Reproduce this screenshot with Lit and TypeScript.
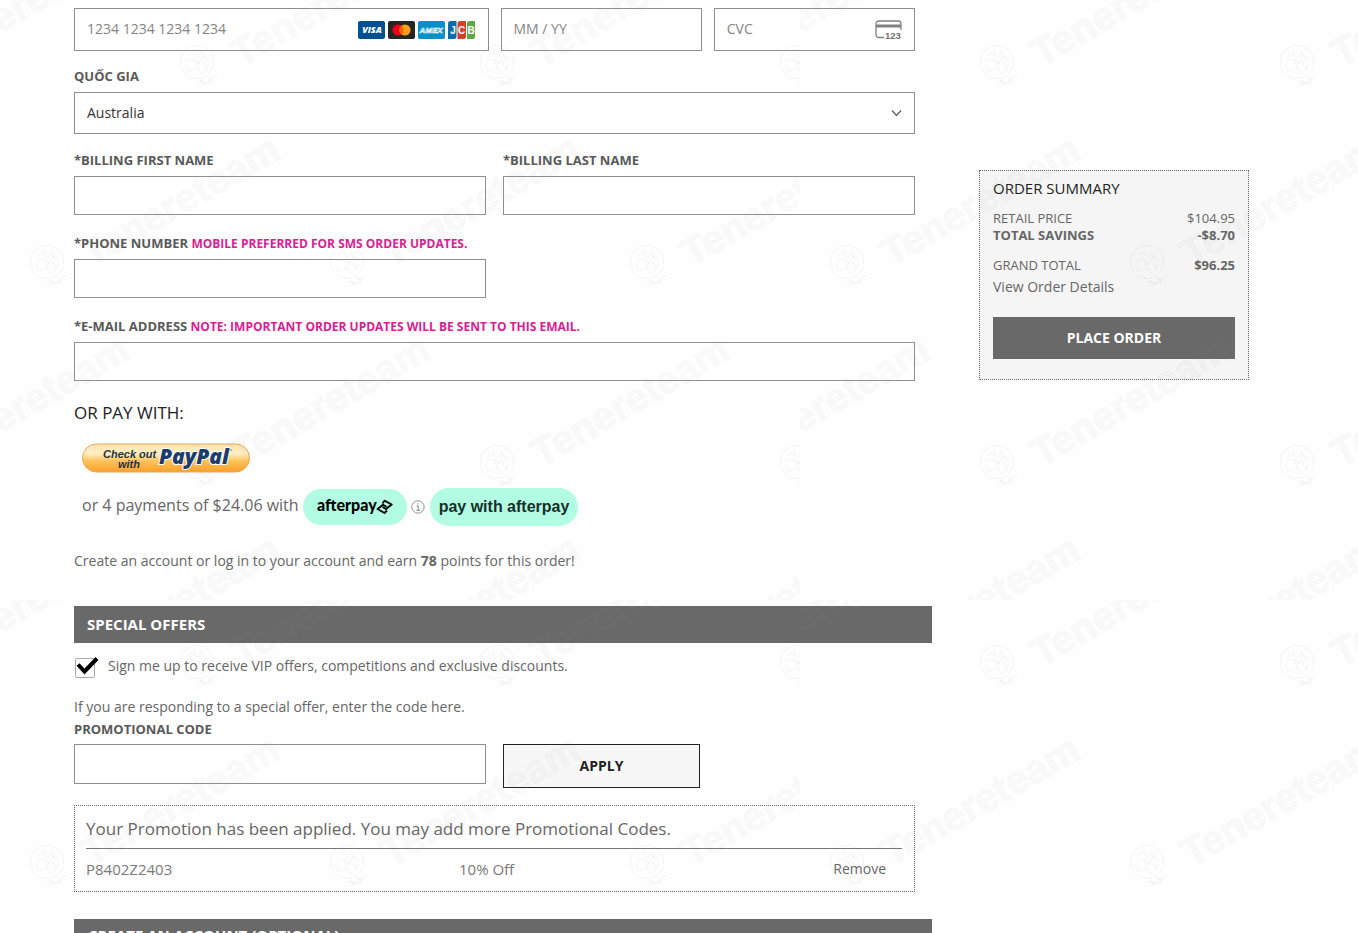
import { LitElement, html, svg, css } from "lit";
import { customElement, state } from "lit/decorators.js";

/* Origins of the watermark stamps inside one 800x600 tile. */
const stamps: Array<[number, number]> = [];
for (let row = 0; row < 4; row++) {
  for (let col = -1; col < 4; col++) {
    stamps.push([(row % 2 ? 50 : -100) + col * 300, 65 + row * 200]);
  }
}

@customElement("water-mark")
export class WaterMark extends LitElement {
  static styles = css`
    :host {
      position: absolute;
      inset: 0;
      overflow: hidden;
      pointer-events: none;
    }
    .sheet {
      display: block;
      width: 100%;
      height: 100%;
    }
    .word {
      font: 700 40px "Liberation Sans", sans-serif;
      fill: #808080;
      fill-opacity: 0.045;
      stroke: #808080;
      stroke-opacity: 0.03;
      stroke-width: 1;
    }
    .seal {
      fill: none;
      stroke: #808080;
      stroke-opacity: 0.12;
      stroke-width: 1;
      stroke-dasharray: 2 1;
    }
  `;

  render() {
    return html`<svg class="sheet" aria-hidden="true">
      <defs>
        <pattern id="tile" width="800" height="600" patternUnits="userSpaceOnUse">
          ${stamps.map(
            ([x, y]) => svg`<g transform="translate(${x} ${y})">
              <g class="seal" transform="translate(-3 -3)">
                <circle r="16.5"></circle>
                <path d="M-9 -7q4 -4 7 0t7 -2M-10 0q5 -5 8 0t3 7M3 -11q6 4 4 10t4 7M-6 9q6 -6 11 3M-3 -3l6 5M9 -5l3 4M-12 3q4 2 3 7M-4 -12l5 4M6 -6l-5 8M12 2q-4 3 -3 8"></path>
                <path d="M0 21l6 -2 3 3 5 -6 6 -3M2 24l6 -3 5 0 3 -5M4 18l3 6M11 15l3 5"></path>
              </g>
              <text class="word" transform="translate(41 3) rotate(-30)">Tenereteam</text>
            </g>`
          )}
        </pattern>
      </defs>
      <rect width="100%" height="100%" fill="url(#tile)"></rect>
    </svg>`;
  }
}

@customElement("card-brands")
export class CardBrands extends LitElement {
  static styles = css`
    :host {
      display: flex;
      gap: 3px;
    }
    svg {
      display: block;
    }
    .mark {
      font: italic 800 9px "Open Sans", sans-serif;
      fill: #fff;
      text-anchor: middle;
    }
    .amex {
      font: italic 700 8px "Liberation Sans", sans-serif;
      fill: #0690c8;
      stroke: #fff;
      stroke-width: 0.6;
      text-anchor: middle;
    }
    .jcb {
      font: 700 10px "Liberation Sans", sans-serif;
      fill: #fff;
      text-anchor: middle;
    }
  `;

  render() {
    return html`
      <svg width="27" height="18" viewBox="0 0 27 18" role="img" aria-label="Visa">
        <rect width="27" height="18" rx="2" fill="#00508f"></rect>
        <text class="mark" x="14" y="12">VISA</text>
      </svg>
      <svg width="27" height="18" viewBox="0 0 27 18" role="img" aria-label="Mastercard">
        <rect width="27" height="18" rx="2" fill="#252525"></rect>
        <circle cx="10" cy="9" r="5.6" fill="#eb001b"></circle>
        <circle cx="17" cy="9" r="5.6" fill="#f79e1b"></circle>
        <path d="M13.5 4.6a5.6 5.6 0 0 1 0 8.8a5.6 5.6 0 0 1 0 -8.8z" fill="#ff5f00"></path>
      </svg>
      <svg width="27" height="18" viewBox="0 0 27 18" role="img" aria-label="American Express">
        <rect width="27" height="18" rx="2" fill="#0690c8"></rect>
        <text class="amex" x="13" y="12">AMEX</text>
      </svg>
      <svg width="28" height="18" viewBox="0 0 28 18" role="img" aria-label="JCB">
        <path d="M2.5 0H8.500V15.500Q8.500 18 6 18H0V2.500Q0 0 2.500 0z" fill="#0f6cab"></path>
        <path d="M12 0H18V15.500Q18 18 15.500 18H9.500V2.500Q9.500 0 12 0z" fill="#d0402b"></path>
        <path d="M21.500 0H27V15.500Q27 18 24.500 18H19V2.500Q19 0 21.500 0z" fill="#5aa943"></path>
        <text class="jcb" x="5" y="12.500">J</text>
        <text class="jcb" x="13.700" y="12.500">C</text>
        <text class="jcb" x="23" y="12.500">B</text>
      </svg>
    `;
  }
}

@customElement("app-root")
export class AppRoot extends LitElement {
  @state() private vip = true;

  static styles = css`
    :host {
      display: block;
      height: 100vh;
      overflow-x: hidden;
      overflow-y: auto;
      scrollbar-width: none;
      background: #fefefe;
      color: #666;
      font: 14px/20px "Open Sans", "Noto Sans", sans-serif;
    }
    * {
      box-sizing: border-box;
    }
    .page {
      position: relative;
      display: grid;
      grid-template-columns: minmax(0, 1fr) 270px;
      gap: 47px;
      padding: 8px 109px 0 74px;
    }
    .fields {
      margin-right: 17px;
    }
    input,
    select,
    button {
      font: inherit;
      border-radius: 0;
      margin: 0;
    }
    .box {
      display: block;
      width: 100%;
      height: 39px;
      padding: 0 12px;
      border: 1px solid #8f8f8f;
      background: #fff;
      color: #333;
      outline: none;
    }
    .box::placeholder {
      color: #858585;
      opacity: 1;
    }
    .card-row {
      display: grid;
      grid-template-columns: repeat(4, 1fr);
      gap: 12px;
    }
    .cell {
      display: grid;
      align-items: center;
    }
    .cell > * {
      grid-area: 1 / 1;
    }
    .cell > .adorn {
      justify-self: end;
      margin-right: 13px;
      pointer-events: none;
    }
    .wide {
      grid-column: span 2;
    }
    .tall {
      height: 43px;
      padding-bottom: 2px;
    }
    .pick {
      height: 42px;
      appearance: none;
    }
    .label {
      display: block;
      margin-bottom: 6px;
      font-size: 13px;
      font-weight: 700;
      line-height: 20px;
      color: #595959;
    }
    .hint {
      color: #d91c93;
      font-size: 12px;
      line-height: 12px;
    }
    .country {
      margin-top: 15px;
    }
    .halves {
      display: grid;
      grid-template-columns: 1fr 1fr;
      column-gap: 17px;
      row-gap: 18px;
      margin-top: 16px;
    }
    .full {
      grid-column: 1 / -1;
    }
    .pay-title {
      margin: 20px 0 18px;
      font-size: 17px;
      font-weight: 400;
      line-height: 24px;
      color: #222;
    }
    .paypal {
      display: block;
      margin-left: 8px;
      padding: 0;
      border: 0;
      background: none;
    }
    .paypal svg {
      display: block;
    }
    .pp-small {
      font: italic 700 11px "Liberation Sans", sans-serif;
      fill: #27323f;
    }
    .pp-big {
      font: italic 800 21px "Open Sans", sans-serif;
      fill: #1a3b6c;
      stroke: #fff;
      stroke-width: 2;
      paint-order: stroke;
    }
    .later {
      display: flex;
      align-items: center;
      gap: 4px;
      margin: 15px 0 0 8px;
      font-size: 16px;
    }
    .later-text {
      padding-bottom: 4px;
    }
    .afterpay {
      display: block;
      font: 900 16px "Lato", sans-serif;
    }
    .info {
      display: block;
      margin-right: 1px;
    }
    .pay-after {
      height: 38px;
      padding: 0 9px;
      border: 0;
      border-radius: 19px;
      background: #b2fce4;
      color: #163029;
      font: 700 16px/20px "Liberation Sans", sans-serif;
    }
    .points {
      margin: 25px 0 35px;
    }
    .bar {
      margin: 0;
      padding: 0 13px;
      height: 37px;
      background: #696969;
      color: #fff;
      font-size: 15px;
      font-weight: 700;
      line-height: 36px;
    }
    .vip {
      display: flex;
      gap: 9px;
      margin-top: 13px;
    }
    .tick {
      display: grid;
      width: 25px;
      height: 24px;
    }
    .tick > * {
      grid-area: 1 / 1;
    }
    .tick input {
      appearance: none;
      align-self: start;
      width: 20px;
      height: 20px;
      margin: 2px 0 0 1px;
      border: 1px solid #aaa;
      border-radius: 2px;
      background: #fff;
    }
    .tick svg {
      pointer-events: none;
    }
    .special {
      margin: 17px 0 0;
    }
    .special + .label {
      margin: 2px 0 5px;
    }
    .promo-row {
      display: grid;
      grid-template-columns: 1fr 1fr;
      column-gap: 17px;
      align-items: start;
    }
    .promo-row .box {
      height: 40px;
    }
    .apply {
      width: 197px;
      height: 44px;
      border: 1px solid #222;
      background: #f7f7f7;
      color: #222;
      font-weight: 700;
    }
    .applied {
      margin-top: 17px;
      padding: 10px 12px 11px 11px;
      border: 1px dotted #666;
    }
    .applied-note {
      margin: 0;
      padding-bottom: 7px;
      border-bottom: 1px solid #777;
      font-size: 17px;
      line-height: 25px;
    }
    .applied-line {
      display: grid;
      grid-template-columns: 373fr 427fr;
      padding: 10px 16px 0 0;
      font-size: 15px;
      line-height: 21px;
      color: #7a7a7a;
    }
    .applied-end {
      display: flex;
      justify-content: space-between;
    }
    .link {
      color: #666;
      font-size: 14px;
      line-height: 20px;
      text-decoration: none;
    }
    .next {
      margin-top: 27px;
      padding: 0 14px;
      line-height: 32px;
    }
    .summary {
      align-self: start;
      position: sticky;
      top: 170px;
      margin-top: 162px;
      padding: 7px 13px 20px;
      border: 1px dotted #666;
      background: #f5f5f5;
    }
    .summary-title {
      margin: 0 0 12px;
      font-size: 15px;
      font-weight: 400;
      line-height: 20px;
      color: #222;
    }
    .sums {
      margin: 0;
      font-size: 13px;
      line-height: 17px;
    }
    .sum {
      display: flex;
      justify-content: space-between;
    }
    .sum dd {
      margin: 0;
    }
    .strong {
      font-weight: 700;
    }
    .grand {
      margin-top: 13px;
    }
    .details {
      display: block;
      margin-top: 3px;
    }
    .place {
      display: block;
      width: 100%;
      height: 42px;
      margin-top: 20px;
      border: 0;
      background: #696969;
      color: #fff;
      font-weight: 700;
    }
  `;

  private toggleVip(e: Event) {
    this.vip = (e.target as HTMLInputElement).checked;
  }

  render() {
    return html`
      <div class="page">
        <main>
          <div class="fields">
            <div class="card-row">
              <div class="cell wide">
                <input class="box tall" aria-label="Card number" placeholder="1234 1234 1234 1234" />
                <card-brands class="adorn"></card-brands>
              </div>
              <input class="box tall" aria-label="Expiry date" placeholder="MM / YY" />
              <div class="cell">
                <input class="box tall" aria-label="CVC" placeholder="CVC" />
                <svg class="adorn" width="27" height="20" viewBox="0 0 27 20" aria-hidden="true">
                  <path d="M9 17.500H4Q1 17.500 1 14.500V4Q1 1 4 1H23Q26 1 26 4V10" fill="none" stroke="#808080" stroke-width="1.300"></path>
                  <rect x="1" y="4.500" width="25" height="3" fill="#808080"></rect>
                  <text x="10" y="18.500" font-family="Liberation Sans" font-weight="700" font-size="9.500" fill="#707070">123</text>
                </svg>
              </div>
            </div>

            <div class="country">
              <label class="label" for="country">QUỐC GIA</label>
              <div class="cell">
                <select class="box pick" id="country">
                  <option>Australia</option>
                </select>
                <svg class="adorn" width="11" height="8" viewBox="0 0 11 8" aria-hidden="true">
                  <path d="M1 1.500L5.500 6.500L10 1.500" fill="none" stroke="#666" stroke-width="1.500"></path>
                </svg>
              </div>
            </div>

            <div class="halves">
              <div>
                <label class="label" for="first">*BILLING FIRST NAME</label>
                <input class="box" id="first" />
              </div>
              <div>
                <label class="label" for="last">*BILLING LAST NAME</label>
                <input class="box" id="last" />
              </div>
              <div>
                <label class="label" for="phone">*PHONE NUMBER <span class="hint">MOBILE PREFERRED FOR SMS ORDER UPDATES.</span></label>
                <input class="box" id="phone" type="tel" />
              </div>
              <div class="full">
                <label class="label" for="email">*E-MAIL ADDRESS <span class="hint">NOTE: IMPORTANT ORDER UPDATES WILL BE SENT TO THIS EMAIL.</span></label>
                <input class="box" id="email" type="email" />
              </div>
            </div>

            <h2 class="pay-title">OR PAY WITH:</h2>
            <button class="paypal" aria-label="Check out with PayPal">
              <svg width="168" height="30" viewBox="0 0 168 30">
                <defs>
                  <linearGradient id="gold" x1="0" y1="0" x2="0" y2="1">
                    <stop offset="0" stop-color="#fde3ae"></stop>
                    <stop offset="0.35" stop-color="#fff0c4"></stop>
                    <stop offset="0.6" stop-color="#ffc35a"></stop>
                    <stop offset="1" stop-color="#fb9f2c"></stop>
                  </linearGradient>
                </defs>
                <rect x="0.500" y="1" width="167" height="28" rx="14" fill="url(#gold)" stroke="#eba65a"></rect>
                <text class="pp-small" x="21" y="15">Check out</text>
                <text class="pp-small" x="36" y="25">with</text>
                <text class="pp-big" x="77" y="21">PayPal</text>
                <circle cx="149" cy="7" r="0.800" fill="#7c6a50"></circle>
              </svg>
            </button>

            <div class="later">
              <span class="later-text">or 4 payments of $24.06 with</span>
              <svg class="afterpay" width="104" height="36" viewBox="0 0 104 36" role="img" aria-label="Afterpay">
                <rect width="104" height="36" rx="18" fill="#b2fce4"></rect>
                <text x="14" y="22">afterpay</text>
                <path d="M79.500 14.500L81.500 11.700L88.700 15.500L83 20L79.500 18M84 21.500L81.500 24L74.500 20L80 15.800L83.500 17.800" fill="none" stroke="#000" stroke-width="1.900" stroke-linejoin="round"></path>
              </svg>
              <svg class="info" width="14" height="14" viewBox="0 0 14 14" role="img" aria-label="Information">
                <circle cx="7" cy="7" r="6.200" fill="none" stroke="#888" stroke-width="0.900"></circle>
                <path d="M7 3.200V4.600M5.700 6H7.200V10M5.400 10.300H9" fill="none" stroke="#777" stroke-width="0.900"></path>
              </svg>
              <button class="pay-after">pay with afterpay</button>
            </div>

            <p class="points">Create an account or log in to your account and earn <b>78</b> points for this order!</p>
          </div>

          <h2 class="bar">SPECIAL OFFERS</h2>
          <div class="fields">
            <div class="vip">
              <span class="tick">
                <input type="checkbox" id="vip" .checked=${this.vip} @change=${this.toggleVip} />
                ${this.vip
                  ? html`<svg width="25" height="24" viewBox="0 0 25 24" aria-hidden="true">
                      <path d="M4 8.500L10.500 15.500L23 2.500" fill="none" stroke="#000" stroke-width="4"></path>
                    </svg>`
                  : ""}
              </span>
              <label for="vip">Sign me up to receive VIP offers, competitions and exclusive discounts.</label>
            </div>

            <p class="special">If you are responding to a special offer, enter the code here.</p>
            <label class="label" for="promo">PROMOTIONAL CODE</label>
            <div class="promo-row">
              <input class="box" id="promo" />
              <button class="apply">APPLY</button>
            </div>

            <div class="applied">
              <p class="applied-note">Your Promotion has been applied. You may add more Promotional Codes.</p>
              <div class="applied-line">
                <span>P8402Z2403</span>
                <div class="applied-end">
                  <span>10% Off</span>
                  <a class="link" href="#remove">Remove</a>
                </div>
              </div>
            </div>
          </div>
          <h2 class="bar next">CREATE AN ACCOUNT (OPTIONAL)</h2>
        </main>

        <aside class="summary">
          <h2 class="summary-title">ORDER SUMMARY</h2>
          <dl class="sums">
            <div class="sum"><dt>RETAIL PRICE</dt><dd>$104.95</dd></div>
            <div class="sum strong"><dt>TOTAL SAVINGS</dt><dd>-$8.70</dd></div>
            <div class="sum grand"><dt>GRAND TOTAL</dt><dd class="strong">$96.25</dd></div>
          </dl>
          <a class="link details" href="#details">View Order Details</a>
          <button class="place">PLACE ORDER</button>
        </aside>
        <water-mark></water-mark>
      </div>
    `;
  }
}
